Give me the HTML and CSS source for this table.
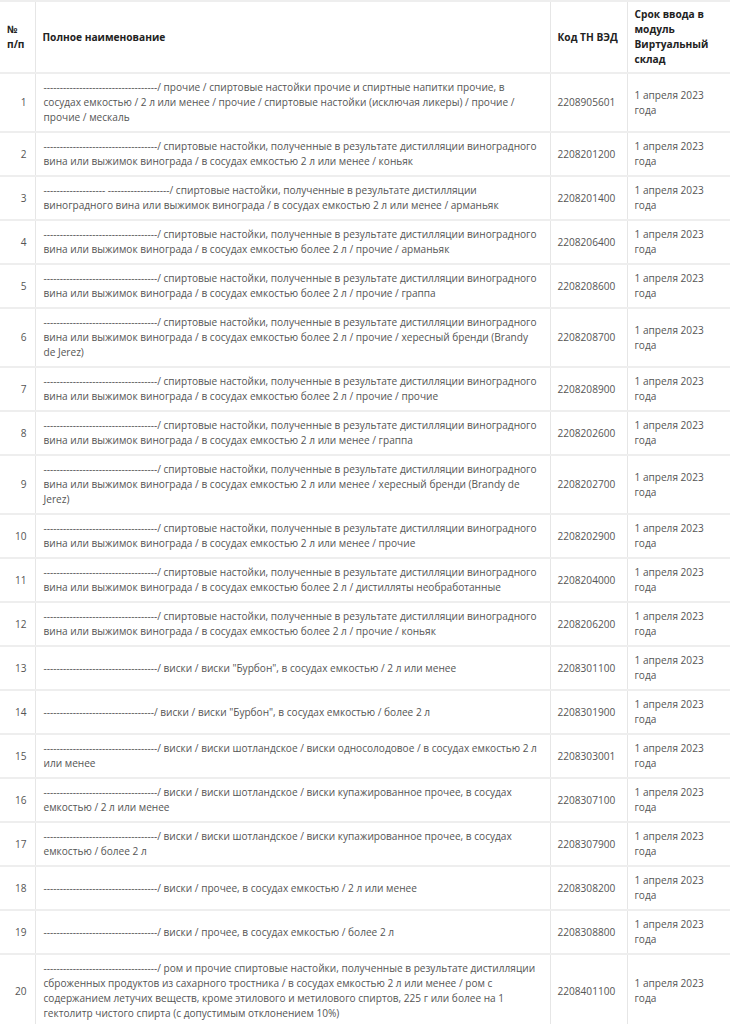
FILE: index.html
```html
<!DOCTYPE html>
<html lang="ru">
<head>
<meta charset="utf-8">
<title>Перечень</title>
<link rel="stylesheet" href="styles.css">
</head>
<body>
<table class="tbl">
  <colgroup>
    <col class="c-num"><col class="c-name"><col class="c-code"><col class="c-date">
  </colgroup>
  <thead>
    <tr>
      <th class="num-h">№ п/п</th>
      <th>Полное наименование</th>
      <th>Код ТН ВЭД</th>
      <th>Срок ввода в модуль Виртуальный склад</th>
    </tr>
  </thead>
  <tbody>
    <tr><td class="num">1</td><td>-----------------------------------/ прочие / спиртовые настойки прочие и спиртные напитки прочие, в сосудах емкостью / 2 л или менее / прочие / спиртовые настойки (исключая ликеры) / прочие / прочие / мескаль</td><td>2208905601</td><td>1 апреля 2023 года</td></tr>
    <tr><td class="num">2</td><td>-----------------------------------/ спиртовые настойки, полученные в результате дистилляции виноградного вина или выжимок винограда / в сосудах емкостью 2 л или менее / коньяк</td><td>2208201200</td><td>1 апреля 2023 года</td></tr>
    <tr><td class="num">3</td><td>------------------- -------------------/ спиртовые настойки, полученные в результате дистилляции виноградного вина или выжимок винограда / в сосудах емкостью 2 л или менее / арманьяк</td><td>2208201400</td><td>1 апреля 2023 года</td></tr>
    <tr><td class="num">4</td><td>-----------------------------------/ спиртовые настойки, полученные в результате дистилляции виноградного вина или выжимок винограда / в сосудах емкостью более 2 л / прочие / арманьяк</td><td>2208206400</td><td>1 апреля 2023 года</td></tr>
    <tr><td class="num">5</td><td>-----------------------------------/ спиртовые настойки, полученные в результате дистилляции виноградного вина или выжимок винограда / в сосудах емкостью более 2 л / прочие / граппа</td><td>2208208600</td><td>1 апреля 2023 года</td></tr>
    <tr><td class="num">6</td><td>-----------------------------------/ спиртовые настойки, полученные в результате дистилляции виноградного вина или выжимок винограда / в сосудах емкостью более 2 л / прочие / хересный бренди (Brandy de&nbsp;Jerez)</td><td>2208208700</td><td>1 апреля 2023 года</td></tr>
    <tr><td class="num">7</td><td>-----------------------------------/ спиртовые настойки, полученные в результате дистилляции виноградного вина или выжимок винограда / в сосудах емкостью более 2 л / прочие / прочие</td><td>2208208900</td><td>1 апреля 2023 года</td></tr>
    <tr><td class="num">8</td><td>-----------------------------------/ спиртовые настойки, полученные в результате дистилляции виноградного вина или выжимок винограда / в сосудах емкостью 2 л или менее / граппа</td><td>2208202600</td><td>1 апреля 2023 года</td></tr>
    <tr><td class="num">9</td><td>-----------------------------------/ спиртовые настойки, полученные в результате дистилляции виноградного вина или выжимок винограда / в сосудах емкостью 2 л или менее / хересный бренди (Brandy de Jerez)</td><td>2208202700</td><td>1 апреля 2023 года</td></tr>
    <tr><td class="num">10</td><td>-----------------------------------/ спиртовые настойки, полученные в результате дистилляции виноградного вина или выжимок винограда / в сосудах емкостью 2 л или менее / прочие</td><td>2208202900</td><td>1 апреля 2023 года</td></tr>
    <tr><td class="num">11</td><td>-----------------------------------/ спиртовые настойки, полученные в результате дистилляции виноградного вина или выжимок винограда / в сосудах емкостью более 2 л / дистилляты необработанные</td><td>2208204000</td><td>1 апреля 2023 года</td></tr>
    <tr><td class="num">12</td><td>-----------------------------------/ спиртовые настойки, полученные в результате дистилляции виноградного вина или выжимок винограда / в сосудах емкостью более 2 л / прочие / коньяк</td><td>2208206200</td><td>1 апреля 2023 года</td></tr>
    <tr><td class="num">13</td><td>-----------------------------------/ виски / виски "Бурбон", в сосудах емкостью / 2 л или менее</td><td>2208301100</td><td>1 апреля 2023 года</td></tr>
    <tr><td class="num">14</td><td>----------------------------------/ виски / виски "Бурбон", в сосудах емкостью / более 2 л</td><td>2208301900</td><td>1 апреля 2023 года</td></tr>
    <tr><td class="num">15</td><td>-----------------------------------/ виски / виски шотландское / виски односолодовое / в сосудах емкостью 2 л или менее</td><td>2208303001</td><td>1 апреля 2023 года</td></tr>
    <tr><td class="num">16</td><td>-----------------------------------/ виски / виски шотландское / виски купажированное прочее, в сосудах емкостью / 2 л или менее</td><td>2208307100</td><td>1 апреля 2023 года</td></tr>
    <tr><td class="num">17</td><td>-----------------------------------/ виски / виски шотландское / виски купажированное прочее, в сосудах емкостью / более 2 л</td><td>2208307900</td><td>1 апреля 2023 года</td></tr>
    <tr><td class="num">18</td><td>-----------------------------------/ виски / прочее, в сосудах емкостью / 2 л или менее</td><td>2208308200</td><td>1 апреля 2023 года</td></tr>
    <tr><td class="num">19</td><td>-----------------------------------/ виски / прочее, в сосудах емкостью / более 2 л</td><td>2208308800</td><td>1 апреля 2023 года</td></tr>
    <tr><td class="num">20</td><td>-----------------------------------/ ром и прочие спиртовые настойки, полученные в результате дистилляции сброженных продуктов из сахарного тростника / в сосудах емкостью 2 л или менее / ром с содержанием летучих веществ, кроме этилового и метилового спиртов, 225 г или более на 1 гектолитр чистого спирта (с допустимым отклонением 10%)</td><td>2208401100</td><td>1 апреля 2023 года</td></tr>
  </tbody>
</table>
</body>
</html>
```

FILE: styles.css
```css
html, body {
  margin: 0;
  padding: 0;
  background: #fff;
  overflow: hidden;
}

.tbl {
  width: 732px;
  border-collapse: collapse;
  table-layout: fixed;
  font-family: "Open Sans", "Noto Sans", sans-serif;
  font-size: 10.1px;
  line-height: 15px;
  color: #555;
}

.c-num { width: 35px; }
.c-name { width: 515px; }
.c-code { width: 77px; }
.c-date { width: 105px; }

.tbl th,
.tbl td {
  border-top: 2px solid #eeeeee;
  border-left: 1px solid #e6e6e6;
  padding: 6px 8px 6px 7px;
  vertical-align: middle;
  text-align: left;
}

.tbl tr > :first-child {
  border-left: none;
}

.tbl th {
  font-weight: 700;
  font-size: 10.2px;
  color: #222;
  padding-top: 5px;
  padding-bottom: 5px;
}

.tbl td:nth-child(2) {
  padding-left: 8px;
  padding-right: 7px;
}

.tbl .num {
  text-align: right;
  padding-right: 8px;
}
```
